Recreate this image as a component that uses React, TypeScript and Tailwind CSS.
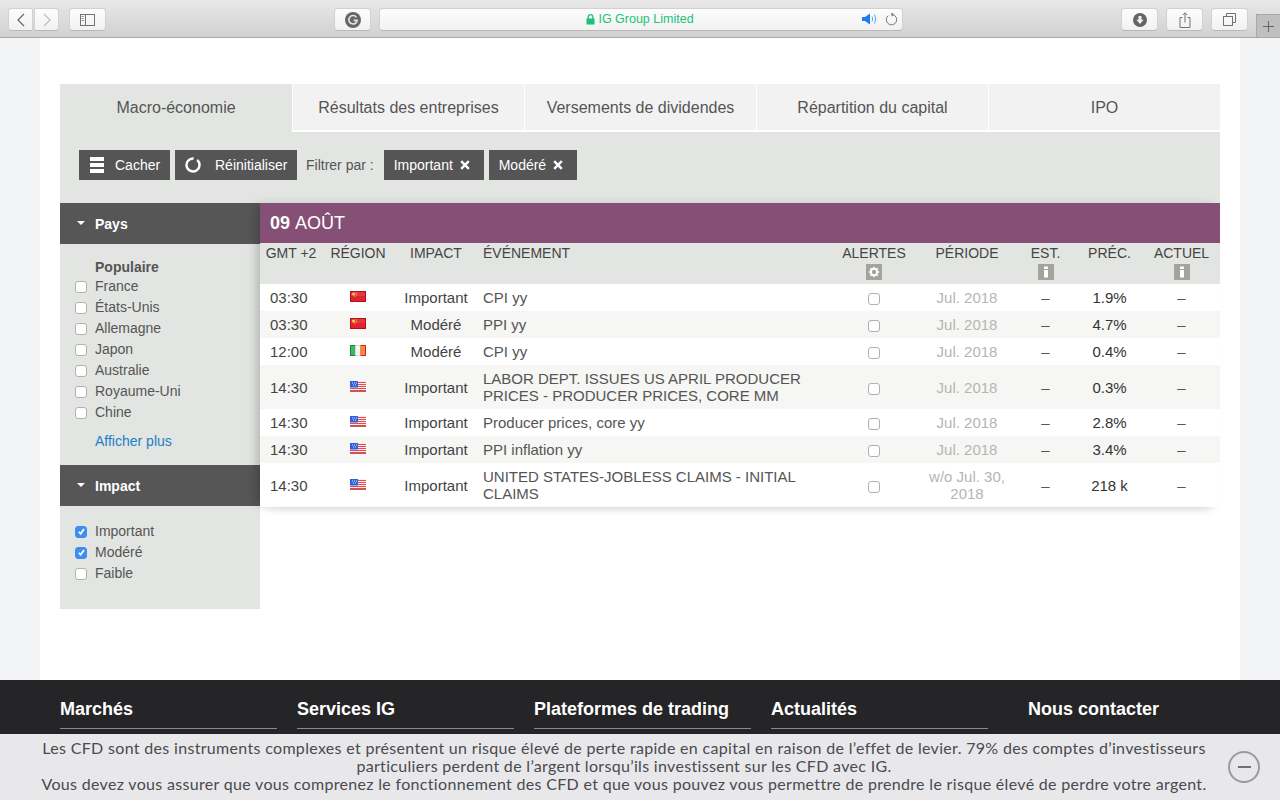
import React from "react";

const ToolBtn = ({ className = "", children }: { className?: string; children?: React.ReactNode }) => (
  <div className={`h-[23px] rounded-[4px] bg-gradient-to-b from-[#fdfdfd] to-[#f2f1f2] border border-[#d2d1d2] border-b-[#b9b8b9] flex items-center justify-center ${className}`}>
    {children}
  </div>
);

const Flag = ({ code }: { code: "cn" | "ie" | "us" }) => {
  if (code === "cn")
    return (
      <svg width="16" height="11" viewBox="0 0 16 11" className="inline-block align-middle">
        <rect x="0.5" y="0.5" width="15" height="10" fill="#e0242f" stroke="#b3101b" />
        <rect x="1" y="1" width="14" height="4" fill="#ea4a50" opacity="0.5" />
        <circle cx="3.5" cy="3" r="1.5" fill="#f6c94a" />
        <circle cx="6" cy="1.8" r="0.6" fill="#f6c94a" />
        <circle cx="6.4" cy="3.6" r="0.6" fill="#f6c94a" />
        <circle cx="5" cy="5.2" r="0.6" fill="#f6c94a" />
      </svg>
    );
  if (code === "ie")
    return (
      <svg width="16" height="11" viewBox="0 0 16 11" className="inline-block align-middle">
        <rect x="0" y="0" width="5.5" height="11" fill="#0f8a3c" />
        <rect x="1" y="1" width="4.5" height="9" fill="#3fb565" />
        <rect x="5.5" y="0" width="5" height="11" fill="#d8dcd6" />
        <rect x="5.5" y="1" width="5" height="9" fill="#f6f6f0" />
        <rect x="10.5" y="0" width="5.5" height="11" fill="#e81c1c" />
        <rect x="10.5" y="1" width="4.5" height="9" fill="#f58a3a" />
      </svg>
    );
  return (
    <svg width="16" height="11" viewBox="0 0 16 11" className="inline-block align-middle">
      <rect x="0" y="0" width="16" height="11" fill="#fbeeee" />
      <rect x="8" y="1" width="8" height="1" fill="#e5484f" />
      <rect x="8" y="3" width="8" height="1" fill="#e5484f" />
      <rect x="8" y="5" width="8" height="1" fill="#e5484f" />
      <rect x="0" y="7" width="16" height="1" fill="#e5484f" />
      <rect x="0" y="9" width="16" height="1" fill="#e5484f" />
      <rect x="0" y="10" width="16" height="1" fill="#b0605c" />
      <rect x="0" y="0" width="8" height="6.5" fill="#2f5ee0" />
      <g fill="#dfe8ff">
        <rect x="2" y="1.5" width="1" height="1" />
        <rect x="4" y="1.5" width="1" height="1" />
        <rect x="6" y="1.5" width="1" height="1" />
        <rect x="3" y="3.5" width="1" height="1" />
        <rect x="5" y="3.5" width="1" height="1" />
      </g>
    </svg>
  );
};

const Box = ({ checked = false, className = "" }: { checked?: boolean; className?: string }) => (
  <span
    className={`inline-flex w-[12px] h-[12px] rounded-[3px] items-center justify-center shrink-0 border ${
      checked ? "bg-[#3b8ff0] border-[#3b8ff0]" : "bg-white border-[#b0b0b0]"
    } ${className}`}
  >
    {checked && (
      <svg width="9" height="9" viewBox="0 0 9 9">
        <path d="M1.8 4.8 L3.6 6.8 L7 2" fill="none" stroke="#fff" strokeWidth="1.7" />
      </svg>
    )}
  </span>
);

const Check = ({ label, checked = false }: { label: string; checked?: boolean }) => (
  <label className="flex items-center h-[21px] pl-[15px]">
    <Box checked={checked} />
    <span className="ml-[8px] text-[14px] text-[#555]">{label}</span>
  </label>
);

const SideHead = ({ label }: { label: string }) => (
  <div className="h-[41px] bg-[#565656] flex items-center pl-[17px] pt-[1px] text-white font-bold text-[14px]">
    <svg width="8" height="4" viewBox="0 0 8 4" className="mr-[10px] mb-[3px]">
      <path d="M0 0 H8 L4 4 Z" fill="#fff" />
    </svg>
    {label}
  </div>
);

const DarkBtn = ({ className = "", children }: { className?: string; children: React.ReactNode }) => (
  <div className={`h-[30px] bg-[#555] text-white text-[14px] flex items-center ${className}`}>{children}</div>
);

const XIcon = () => (
  <svg width="10" height="10" viewBox="0 0 10 10" className="ml-[7px]">
    <path d="M1.2 1.2 L8.8 8.8 M8.8 1.2 L1.2 8.8" stroke="#fff" strokeWidth="2.4" />
  </svg>
);

const InfoSq = () => (
  <span className="inline-flex w-[16px] h-[16px] bg-[#a3a29c] items-center justify-center">
    <svg width="6" height="12" viewBox="0 0 6 12">
      <rect x="1" y="0.5" width="4" height="2.5" fill="#fff" />
      <rect x="1" y="4" width="4" height="7.5" fill="#fff" />
    </svg>
  </span>
);

const GearSq = () => (
  <span className="inline-flex w-[16px] h-[16px] bg-[#a3a29c] items-center justify-center">
    <svg width="12" height="12" viewBox="0 0 12 12">
      <circle cx="6" cy="6" r="3.2" fill="none" stroke="#fff" strokeWidth="2" />
      <path d="M6 0.8 V3 M6 9 V11.2 M0.8 6 H3 M9 6 H11.2 M2.3 2.3 L3.9 3.9 M8.1 8.1 L9.7 9.7 M9.7 2.3 L8.1 3.9 M3.9 8.1 L2.3 9.7" stroke="#fff" strokeWidth="1.6" />
    </svg>
  </span>
);

type Row = {
  t: string;
  f: "cn" | "ie" | "us";
  imp: string;
  ev: React.ReactNode;
  per: React.ReactNode;
  prec: string;
  tall?: boolean;
};

const rows: Row[] = [
  { t: "03:30", f: "cn", imp: "Important", ev: "CPI yy", per: "Jul. 2018", prec: "1.9%" },
  { t: "03:30", f: "cn", imp: "Modéré", ev: "PPI yy", per: "Jul. 2018", prec: "4.7%" },
  { t: "12:00", f: "ie", imp: "Modéré", ev: "CPI yy", per: "Jul. 2018", prec: "0.4%" },
  { t: "14:30", f: "us", imp: "Important", ev: "LABOR DEPT. ISSUES US APRIL PRODUCER PRICES - PRODUCER PRICES, CORE MM", per: "Jul. 2018", prec: "0.3%", tall: true },
  { t: "14:30", f: "us", imp: "Important", ev: "Producer prices, core yy", per: "Jul. 2018", prec: "2.8%" },
  { t: "14:30", f: "us", imp: "Important", ev: "PPI inflation yy", per: "Jul. 2018", prec: "3.4%" },
  { t: "14:30", f: "us", imp: "Important", ev: "UNITED STATES-JOBLESS CLAIMS - INITIAL CLAIMS", per: "w/o Jul. 30, 2018", prec: "218 k", tall: true },
];

const tabs = ["Macro-économie", "Résultats des entreprises", "Versements de dividendes", "Répartition du capital", "IPO"];
const countries = ["France", "États-Unis", "Allemagne", "Japon", "Australie", "Royaume-Uni", "Chine"];

export default function App() {
  return (
    <div className="h-screen overflow-hidden flex flex-col bg-[#f3f4f6] font-['Liberation_Sans',Arial,sans-serif]">
      {/* Browser chrome */}
      <div className="h-[38px] shrink-0 border-b border-[#a9a8a9] bg-gradient-to-b from-[#e9e8e9] to-[#d2d1d2] flex items-start pt-[8px] pl-[8px]">
        <ToolBtn className="w-[25px] rounded-r-[2px]">
          <svg width="10" height="14" viewBox="0 0 10 14">
            <path d="M8 1 L2 7 L8 13" fill="none" stroke="#6b6b6b" strokeWidth="1.3" />
          </svg>
        </ToolBtn>
        <ToolBtn className="w-[25px] ml-[1px] rounded-l-[2px]">
          <svg width="10" height="14" viewBox="0 0 10 14">
            <path d="M2 1 L8 7 L2 13" fill="none" stroke="#c2c2c2" strokeWidth="1.3" />
          </svg>
        </ToolBtn>
        <ToolBtn className="w-[37px] ml-[10px]">
          <svg width="15" height="12" viewBox="0 0 15 12">
            <rect x="0.5" y="0.5" width="14" height="11" fill="none" stroke="#727272" />
            <path d="M5.5 0.5 V11.5" stroke="#727272" />
            <path d="M1.5 2.5 H4 M1.5 4.5 H4 M1.5 6.5 H4" stroke="#9a9a9a" />
          </svg>
        </ToolBtn>
        <ToolBtn className="w-[37px] ml-[228px]">
          <svg width="16" height="16" viewBox="0 0 16 16">
            <circle cx="8" cy="8" r="8" fill="#666" />
            <path d="M11.4 5.2 A4.2 4.2 0 1 0 12.2 8.4 H8.6" fill="none" stroke="#e6e6e6" strokeWidth="1.6" />
          </svg>
        </ToolBtn>
        <ToolBtn className="w-[524px] ml-[8px] relative">
          <div className="flex items-center text-[12.5px] text-[#1cc27a] mr-[2px]">
            <svg width="9" height="11" viewBox="0 0 9 11" className="mr-[3px]">
              <rect x="0.5" y="4.5" width="8" height="6" fill="#1cc27a" />
              <path d="M2.2 5 V3 A2.3 2.3 0 0 1 6.8 3 V5" fill="none" stroke="#1cc27a" strokeWidth="1.3" />
            </svg>
            IG Group Limited
          </div>
          <div className="absolute right-[4px] top-[3px] flex items-center gap-[6px]">
            <svg width="17" height="14" viewBox="0 0 17 14">
              <path d="M0 5 H3 L8 1.5 V12.5 L3 9 H0 Z" fill="#1b7cf2" />
              <path d="M10 4.5 Q11.5 7 10 9.5 M12.5 2.5 Q15 7 12.5 11.5" fill="none" stroke="#5aa2f6" strokeWidth="1" />
            </svg>
            <svg width="13" height="14" viewBox="0 0 13 14">
              <path d="M7.8 2.6 A5.2 5.2 0 1 1 3.2 3.6" fill="none" stroke="#777" strokeWidth="1" />
              <path d="M6.4 0.4 L9.2 2.6 L6.4 4.6 Z" fill="#777" />
            </svg>
          </div>
        </ToolBtn>
        <ToolBtn className="w-[37px] ml-[218px]">
          <svg width="14" height="14" viewBox="0 0 14 14">
            <circle cx="7" cy="7" r="7" fill="#666" />
            <path d="M5.5 3 H8.5 V6.8 H10.6 L7 11 L3.4 6.8 H5.5 Z" fill="#f2f2f2" />
          </svg>
        </ToolBtn>
        <ToolBtn className="w-[37px] ml-[8px]">
          <svg width="12" height="16" viewBox="0 0 12 16">
            <path d="M3.5 5.5 H1 V15.5 H11 V5.5 H8.5" fill="none" stroke="#727272" />
            <path d="M6 10.5 V1 M3.8 3 L6 0.8 L8.2 3" fill="none" stroke="#727272" />
          </svg>
        </ToolBtn>
        <ToolBtn className="w-[37px] ml-[8px]">
          <svg width="13" height="13" viewBox="0 0 13 13">
            <path d="M3.5 3 V0.5 H12.5 V9.5 H10" fill="none" stroke="#727272" />
            <rect x="0.5" y="3.5" width="9" height="9" fill="none" stroke="#727272" />
          </svg>
        </ToolBtn>
        <div className="w-[24px] h-[23px] ml-[8px] mt-[6px] bg-[#bfbfbf] border-l border-t border-[#a9a8a9] flex items-center justify-center">
          <svg width="11" height="11" viewBox="0 0 11 11">
            <path d="M5.5 0 V11 M0 5.5 H11" stroke="#666" />
          </svg>
        </div>
      </div>

      {/* Page body */}
      <main className="h-[642px] shrink-0 mx-[40px] bg-white px-[20px] pt-[46px]">
        <div className="flex h-[48px] bg-[#f2f2f2]">
          {tabs.map((t, i) => (
            <div
              key={t}
              className={`w-[232px] flex items-center justify-center text-[16px] text-[#555] ${
                i === 0 ? "bg-[#e3e5e3]" : "border-l border-white border-b-2 pt-[2px]"
              }`}
            >
              {t}
            </div>
          ))}
        </div>
        <div className="h-[71px] bg-[#e3e5e3] flex items-start pt-[18px] pl-[19px]">
          <DarkBtn className="w-[91px] pl-[11px]">
            <span className="flex flex-col gap-[2px] mr-[11px]">
              <span className="block w-[14px] h-[4px] bg-white" />
              <span className="block w-[14px] h-[4px] bg-white" />
              <span className="block w-[14px] h-[4px] bg-white" />
            </span>
            Cacher
          </DarkBtn>
          <DarkBtn className="w-[122px] ml-[5px] pl-[10px]">
            <svg width="16" height="16" viewBox="0 0 16 16" className="mr-[14px]">
              <path d="M12.2 3 A6.5 6.5 0 1 1 8.6 1.5" fill="none" stroke="#fff" strokeWidth="2.4" />
            </svg>
            Réinitialiser
          </DarkBtn>
          <span className="ml-[9px] h-[30px] pt-[1px] flex items-center text-[14px] text-[#555]">Filtrer par :</span>
          <DarkBtn className="ml-[10px] w-[100px] pl-[10px]">
            Important
            <XIcon />
          </DarkBtn>
          <DarkBtn className="ml-[5px] w-[88px] pl-[10px]">
            Modéré
            <XIcon />
          </DarkBtn>
        </div>
        <div className="flex items-start">
          <aside className="w-[200px] h-[406px] shrink-0 bg-[#e3e5e3]">
            <SideHead label="Pays" />
            <div className="pt-[14px]">
              <div className="pl-[35px] text-[14px] font-bold text-[#555] h-[18px] leading-[18px]">Populaire</div>
              <div>
                {countries.map((c) => (
                  <Check key={c} label={c} />
                ))}
              </div>
              <a className="block pl-[35px] mt-[8px] text-[14px] text-[#1b7fc4] h-[21px] leading-[21px]">Afficher plus</a>
            </div>
            <div className="mt-[13px]">
              <SideHead label="Impact" />
            </div>
            <div className="pt-[15px]">
              <Check label="Important" checked />
              <Check label="Modéré" checked />
              <Check label="Faible" />
            </div>
          </aside>
          <section className="w-[960px] relative shadow-[-6px_0_10px_-3px_rgba(0,0,0,0.22),0_10px_10px_-8px_rgba(0,0,0,0.10)]">
            <div className="h-[40px] bg-[#864f75] text-white text-[18px] flex items-center pl-[10px]">
              <b>09</b>
              <span className="ml-[5px]">AOÛT</span>
            </div>
            <table className="w-[960px] table-fixed border-collapse bg-white">
              <colgroup>
                <col className="w-[62px]" />
                <col className="w-[72px]" />
                <col className="w-[84px]" />
                <col className="w-[357px]" />
                <col className="w-[78px]" />
                <col className="w-[108px]" />
                <col className="w-[49px]" />
                <col className="w-[79px]" />
                <col className="w-[71px]" />
              </colgroup>
              <thead>
                <tr className="h-[41px] bg-[#e3e5e3] text-[14px] font-normal text-[#444] align-top leading-[16px]">
                  <th className="font-normal pt-[2px] whitespace-nowrap">GMT +2</th>
                  <th className="font-normal pt-[2px]">RÉGION</th>
                  <th className="font-normal pt-[2px]">IMPACT</th>
                  <th className="font-normal pt-[2px] text-left pl-[5px]">ÉVÉNEMENT</th>
                  <th className="font-normal pt-[2px]">
                    <div>ALERTES</div>
                    <div className="mt-[3px] h-[16px] flex justify-center"><GearSq /></div>
                  </th>
                  <th className="font-normal pt-[2px]">PÉRIODE</th>
                  <th className="font-normal pt-[2px]">
                    <div>EST.</div>
                    <div className="mt-[3px] h-[16px] flex justify-center"><InfoSq /></div>
                  </th>
                  <th className="font-normal pt-[2px]">PRÉC.</th>
                  <th className="font-normal pt-[2px] pr-[6px]">
                    <div>ACTUEL</div>
                    <div className="mt-[3px] h-[16px] flex justify-center"><InfoSq /></div>
                  </th>
                </tr>
              </thead>
              <tbody className="text-[15px] leading-[17px] text-[#444]">
                {rows.map((r, i) => (
                  <tr key={i} className={`${r.tall ? "h-[44px]" : "h-[27px]"} ${i === 1 || i === 3 || i === 5 ? "bg-[#f6f6f4]" : "bg-white"}`}>
                    <td className="pl-[10px]">{r.t}</td>
                    <td className="text-center leading-[11px] pb-[3px]"><Flag code={r.f} /></td>
                    <td className="text-center">{r.imp}</td>
                    <td className="pl-[5px] pr-[20px] text-[#555]">{r.ev}</td>
                    <td className="text-center"><Box className="align-middle" /></td>
                    <td className="text-center px-[14px] text-[#b5b5b5]">{r.per}</td>
                    <td className="text-center text-[#555]">–</td>
                    <td className="text-center text-[#333]">{r.prec}</td>
                    <td className="text-center pr-[6px] text-[#555]">–</td>
                  </tr>
                ))}
              </tbody>
            </table>
          </section>
        </div>
      </main>

      {/* Footer */}
      <footer className="h-[54px] shrink-0 bg-[#252527] flex pl-[60px] text-white text-[18px] font-bold">
        {["Marchés", "Services IG", "Plateformes de trading", "Actualités"].map((h) => (
          <div key={h} className="w-[217px] mr-[20px] h-[49px] border-b border-[#8a8a8c] pt-[19px] leading-[20px]">
            {h}
          </div>
        ))}
        <div className="ml-[20px] pt-[19px] leading-[20px]">Nous contacter</div>
      </footer>

      {/* Risk disclaimer */}
      <div className="h-[66px] shrink-0 bg-[#e8e8ea] flex relative">
        <p className="w-[1208px] ml-[20px] pt-[5px] text-center text-[16px] tracking-[0.32px] leading-[18px] text-[#4a4a4f] font-['Lato',sans-serif]">
          Les CFD sont des instruments complexes et présentent un risque élevé de perte rapide en capital en raison de l’effet de levier. 79% des comptes d’investisseurs particuliers perdent de l’argent lorsqu’ils investissent sur les CFD avec IG.
          <br />
          Vous devez vous assurer que vous comprenez le fonctionnement des CFD et que vous pouvez vous permettre de prendre le risque élevé de perdre votre argent.
        </p>
        <div className="absolute left-[1228px] top-[17px] w-[32px] h-[32px] rounded-full border-2 border-[#9a9aa0] flex items-center justify-center">
          <span className="block w-[13px] h-[2px] bg-[#6e6e74]" />
        </div>
      </div>
    </div>
  );
}
